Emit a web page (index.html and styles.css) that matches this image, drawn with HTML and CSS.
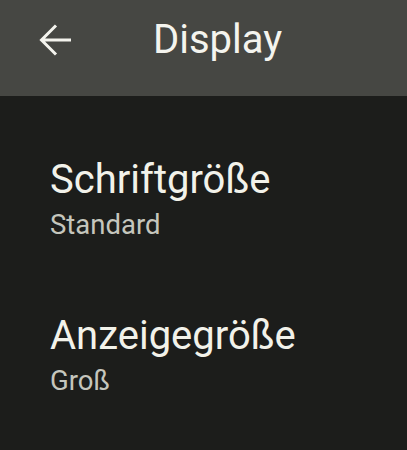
FILE: index.html
```html
<!DOCTYPE html>
<html lang="de">
<head>
<meta charset="utf-8">
<link rel="stylesheet" href="styles.css">
</head>
<body>
<header class="appbar">
  <svg class="back" width="34" height="32" viewBox="0 0 34 32" aria-hidden="true">
    <path d="M2.5 16 H32 M17 1.5 L2.5 16 L17 30.5" fill="none" stroke="#f4f4ee" stroke-width="3" stroke-linecap="butt" stroke-linejoin="miter"/>
  </svg>
  <h1 class="title">Display</h1>
</header>
<main class="list">
  <div class="item">
    <div class="item-title">Schriftgröße</div>
    <div class="item-sub">Standard</div>
  </div>
  <div class="item">
    <div class="item-title">Anzeigegröße</div>
    <div class="item-sub">Groß</div>
  </div>
</main>
</body>
</html>
```

FILE: styles.css
```css
html, body {
  margin: 0;
  padding: 0;
}
body {
  background: #1c1d1b;
  font-family: Roboto, "Noto Sans", sans-serif;
  width: 407px;
  height: 450px;
  overflow: hidden;
}
.appbar {
  box-sizing: border-box;
  height: 96px;
  padding: 0 0 16px 39px;
  background: #464743;
  display: flex;
  align-items: center;
}
.back {
  display: block;
  flex: none;
}
.title {
  margin: 0 0 0 80px;
  font-size: 40px;
  line-height: 46px;
  font-weight: 400;
  color: #f4f4ee;
}
.list {
  padding-top: 25px;
}
.item {
  padding: 36px 0 36px 50px;
}
.item-title {
  font-size: 40px;
  line-height: 46px;
  color: #f2f2ea;
}
.item-sub {
  margin-top: 6px;
  font-size: 27.5px;
  line-height: 32px;
  color: #c5c6bd;
}
```
